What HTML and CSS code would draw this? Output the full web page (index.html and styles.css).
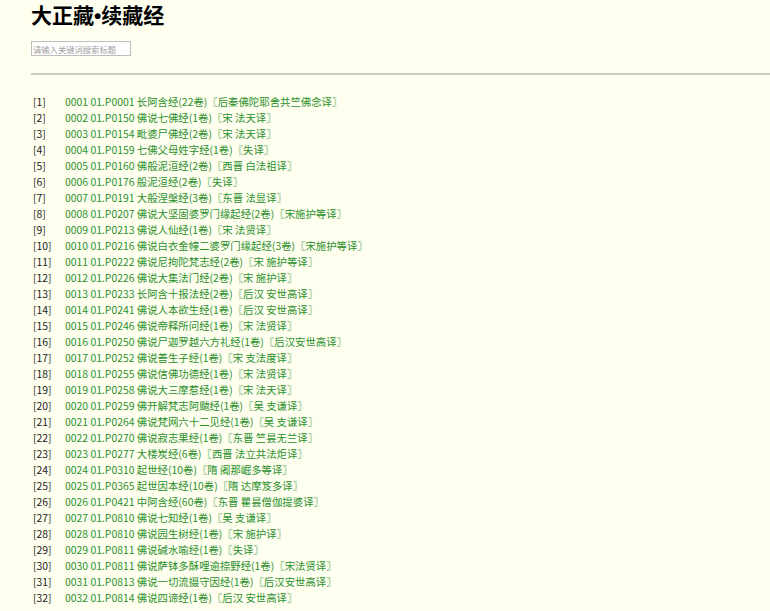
FILE: index.html
```html
<!DOCTYPE html>
<html lang="zh">
<head>
<meta charset="utf-8">
<title>大正藏•续藏经</title>
<link rel="stylesheet" href="styles.css">
</head>
<body>
<div class="page">
  <h1 class="title">大正藏•续藏经</h1>
  <input class="search" type="text" placeholder="请输入关键词搜索标题">
  <hr class="rule">
  <ul class="list">
    <li class="row"><span class="num">[1]</span><a class="item">0001 01.P0001 长阿含经(22卷)〖后秦佛陀耶舍共竺佛念译〗</a></li>
    <li class="row"><span class="num">[2]</span><a class="item">0002 01.P0150 佛说七佛经(1卷)〖宋 法天译〗</a></li>
    <li class="row"><span class="num">[3]</span><a class="item">0003 01.P0154 毗婆尸佛经(2卷)〖宋 法天译〗</a></li>
    <li class="row"><span class="num">[4]</span><a class="item">0004 01.P0159 七佛父母姓字经(1卷)〖失译〗</a></li>
    <li class="row"><span class="num">[5]</span><a class="item">0005 01.P0160 佛般泥洹经(2卷)〖西晋 白法祖译〗</a></li>
    <li class="row"><span class="num">[6]</span><a class="item">0006 01.P0176 般泥洹经(2卷)〖失译〗</a></li>
    <li class="row"><span class="num">[7]</span><a class="item">0007 01.P0191 大般涅槃经(3卷)〖东晋 法显译〗</a></li>
    <li class="row"><span class="num">[8]</span><a class="item">0008 01.P0207 佛说大坚固婆罗门缘起经(2卷)〖宋施护等译〗</a></li>
    <li class="row"><span class="num">[9]</span><a class="item">0009 01.P0213 佛说人仙经(1卷)〖宋 法贤译〗</a></li>
    <li class="row"><span class="num">[10]</span><a class="item">0010 01.P0216 佛说白衣金幢二婆罗门缘起经(3卷)〖宋施护等译〗</a></li>
    <li class="row"><span class="num">[11]</span><a class="item">0011 01.P0222 佛说尼拘陀梵志经(2卷)〖宋 施护等译〗</a></li>
    <li class="row"><span class="num">[12]</span><a class="item">0012 01.P0226 佛说大集法门经(2卷)〖宋 施护译〗</a></li>
    <li class="row"><span class="num">[13]</span><a class="item">0013 01.P0233 长阿含十报法经(2卷)〖后汉 安世高译〗</a></li>
    <li class="row"><span class="num">[14]</span><a class="item">0014 01.P0241 佛说人本欲生经(1卷)〖后汉 安世高译〗</a></li>
    <li class="row"><span class="num">[15]</span><a class="item">0015 01.P0246 佛说帝释所问经(1卷)〖宋 法贤译〗</a></li>
    <li class="row"><span class="num">[16]</span><a class="item">0016 01.P0250 佛说尸迦罗越六方礼经(1卷)〖后汉安世高译〗</a></li>
    <li class="row"><span class="num">[17]</span><a class="item">0017 01.P0252 佛说善生子经(1卷)〖宋 支法度译〗</a></li>
    <li class="row"><span class="num">[18]</span><a class="item">0018 01.P0255 佛说信佛功德经(1卷)〖宋 法贤译〗</a></li>
    <li class="row"><span class="num">[19]</span><a class="item">0019 01.P0258 佛说大三摩惹经(1卷)〖宋 法天译〗</a></li>
    <li class="row"><span class="num">[20]</span><a class="item">0020 01.P0259 佛开解梵志阿颰经(1卷)〖吴 支谦译〗</a></li>
    <li class="row"><span class="num">[21]</span><a class="item">0021 01.P0264 佛说梵网六十二见经(1卷)〖吴 支谦译〗</a></li>
    <li class="row"><span class="num">[22]</span><a class="item">0022 01.P0270 佛说寂志果经(1卷)〖东晋 竺昙无兰译〗</a></li>
    <li class="row"><span class="num">[23]</span><a class="item">0023 01.P0277 大楼炭经(6卷)〖西晋 法立共法炬译〗</a></li>
    <li class="row"><span class="num">[24]</span><a class="item">0024 01.P0310 起世经(10卷)〖隋 阇那崛多等译〗</a></li>
    <li class="row"><span class="num">[25]</span><a class="item">0025 01.P0365 起世因本经(10卷)〖隋 达摩笈多译〗</a></li>
    <li class="row"><span class="num">[26]</span><a class="item">0026 01.P0421 中阿含经(60卷)〖东晋 瞿昙僧伽提婆译〗</a></li>
    <li class="row"><span class="num">[27]</span><a class="item">0027 01.P0810 佛说七知经(1卷)〖吴 支谦译〗</a></li>
    <li class="row"><span class="num">[28]</span><a class="item">0028 01.P0810 佛说园生树经(1卷)〖宋 施护译〗</a></li>
    <li class="row"><span class="num">[29]</span><a class="item">0029 01.P0811 佛说碱水喻经(1卷)〖失译〗</a></li>
    <li class="row"><span class="num">[30]</span><a class="item">0030 01.P0811 佛说萨钵多酥哩逾捺野经(1卷)〖宋法贤译〗</a></li>
    <li class="row"><span class="num">[31]</span><a class="item">0031 01.P0813 佛说一切流摄守因经(1卷)〖后汉安世高译〗</a></li>
    <li class="row"><span class="num">[32]</span><a class="item">0032 01.P0814 佛说四谛经(1卷)〖后汉 安世高译〗</a></li>
  </ul>
</div>
</body>
</html>
```

FILE: styles.css
```css
html, body {
  margin: 0;
  padding: 0;
  background: #fffff0;
}
body {
  font-family: "Noto Sans CJK SC", "Noto Sans", sans-serif;
  color: #222;
  overflow: hidden;
}
.page {
  padding-left: 31px;
}
.title {
  margin: 0;
  padding-top: 1px;
  font-family: "Liberation Sans", "Noto Sans CJK SC", sans-serif;
  font-size: 21px;
  line-height: 30px;
  font-weight: bold;
  color: #000;
}
.search {
  display: block;
  box-sizing: border-box;
  margin: 10px 0 0 0;
  width: 100px;
  height: 15px;
  padding: 0 1px;
  border: 1px solid #bdbdbd;
  background: #fff;
  font-family: "Noto Sans CJK SC", sans-serif;
  font-size: 8.3px;
  line-height: 13px;
  outline: none;
}
.search::placeholder {
  color: #a0a0a0;
}
.rule {
  margin: 17px 0 0 0;
  height: 0;
  border: 0;
  border-top: 2px solid #cbcbc4;
}
.list {
  list-style: none;
  margin: 19px 0 0 0;
  padding: 0;
}
.row {
  display: grid;
  grid-template-columns: 32px auto;
  justify-content: start;
  padding-left: 2px;
  font-size: 10.4px;
  line-height: 16px;
  white-space: nowrap;
}
.num {
  color: #1a1a1a;
}
.item {
  color: #2b8f2b;
  text-decoration: none;
  cursor: pointer;
}
```
